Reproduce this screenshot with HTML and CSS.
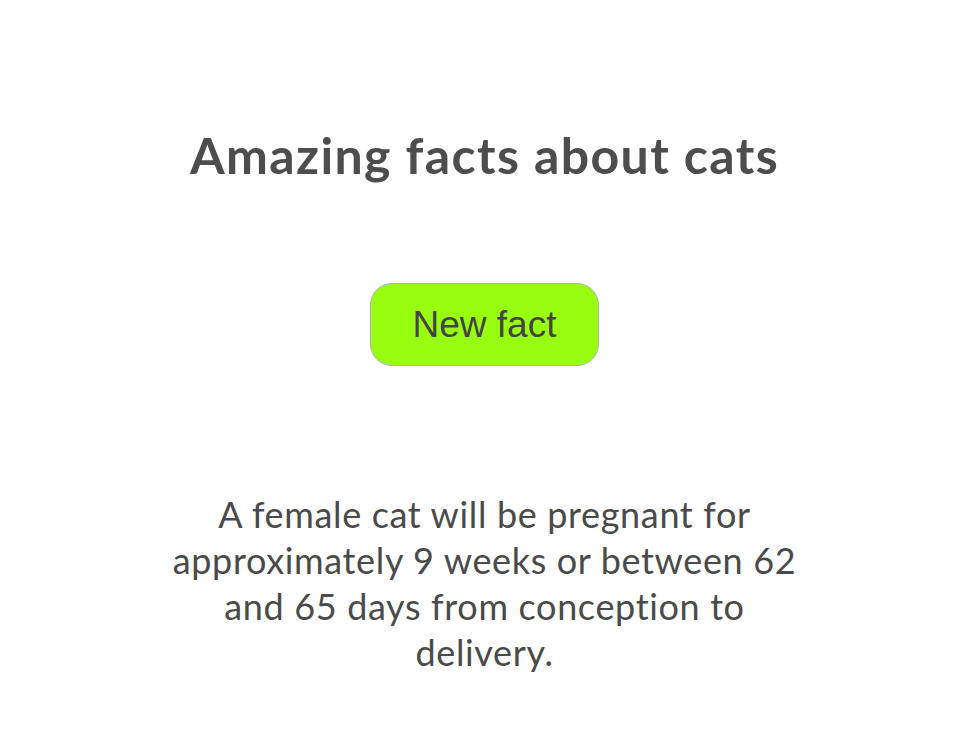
FILE: index.html
```html
<!DOCTYPE html>
<html lang="en">
<head>
<meta charset="utf-8">
<title>Cat facts</title>
<link rel="stylesheet" href="styles.css">
</head>
<body>
<main class="page">
  <h1 class="title">Amazing facts about cats</h1>
  <button class="fact-button" type="button">New fact</button>
  <p class="fact">A female cat will be pregnant for approximately 9 weeks or between 62 and 65 days from conception to delivery.</p>
</main>
</body>
</html>
```
FILE: styles.css
```css
html, body {
  margin: 0;
  padding: 0;
  background: #ffffff;
}
body {
  font-family: "Lato", "Open Sans", sans-serif;
  color: #4a4a4a;
}
.page {
  display: flex;
  flex-direction: column;
  align-items: center;
  padding-top: 124px;
}
.title {
  margin: 0;
  font-size: 50px;
  font-weight: 700;
  line-height: 62px;
  letter-spacing: 1.4px;
  color: #4d4d4d;
}
.fact-button {
  margin-top: 97px;
  width: 229px;
  height: 83px;
  border: 1px solid #b0b0b0;
  border-radius: 22px;
  background: #99ff11;
  color: #444444;
  font-family: "Liberation Sans", Arial, sans-serif;
  font-size: 37px;
  padding: 0;
}
.fact {
  margin: 125px 0 0;
  width: 640px;
  text-align: center;
  font-size: 36px;
  line-height: 46px;
  letter-spacing: 0.65px;
  color: #4a4a4a;
}
```
